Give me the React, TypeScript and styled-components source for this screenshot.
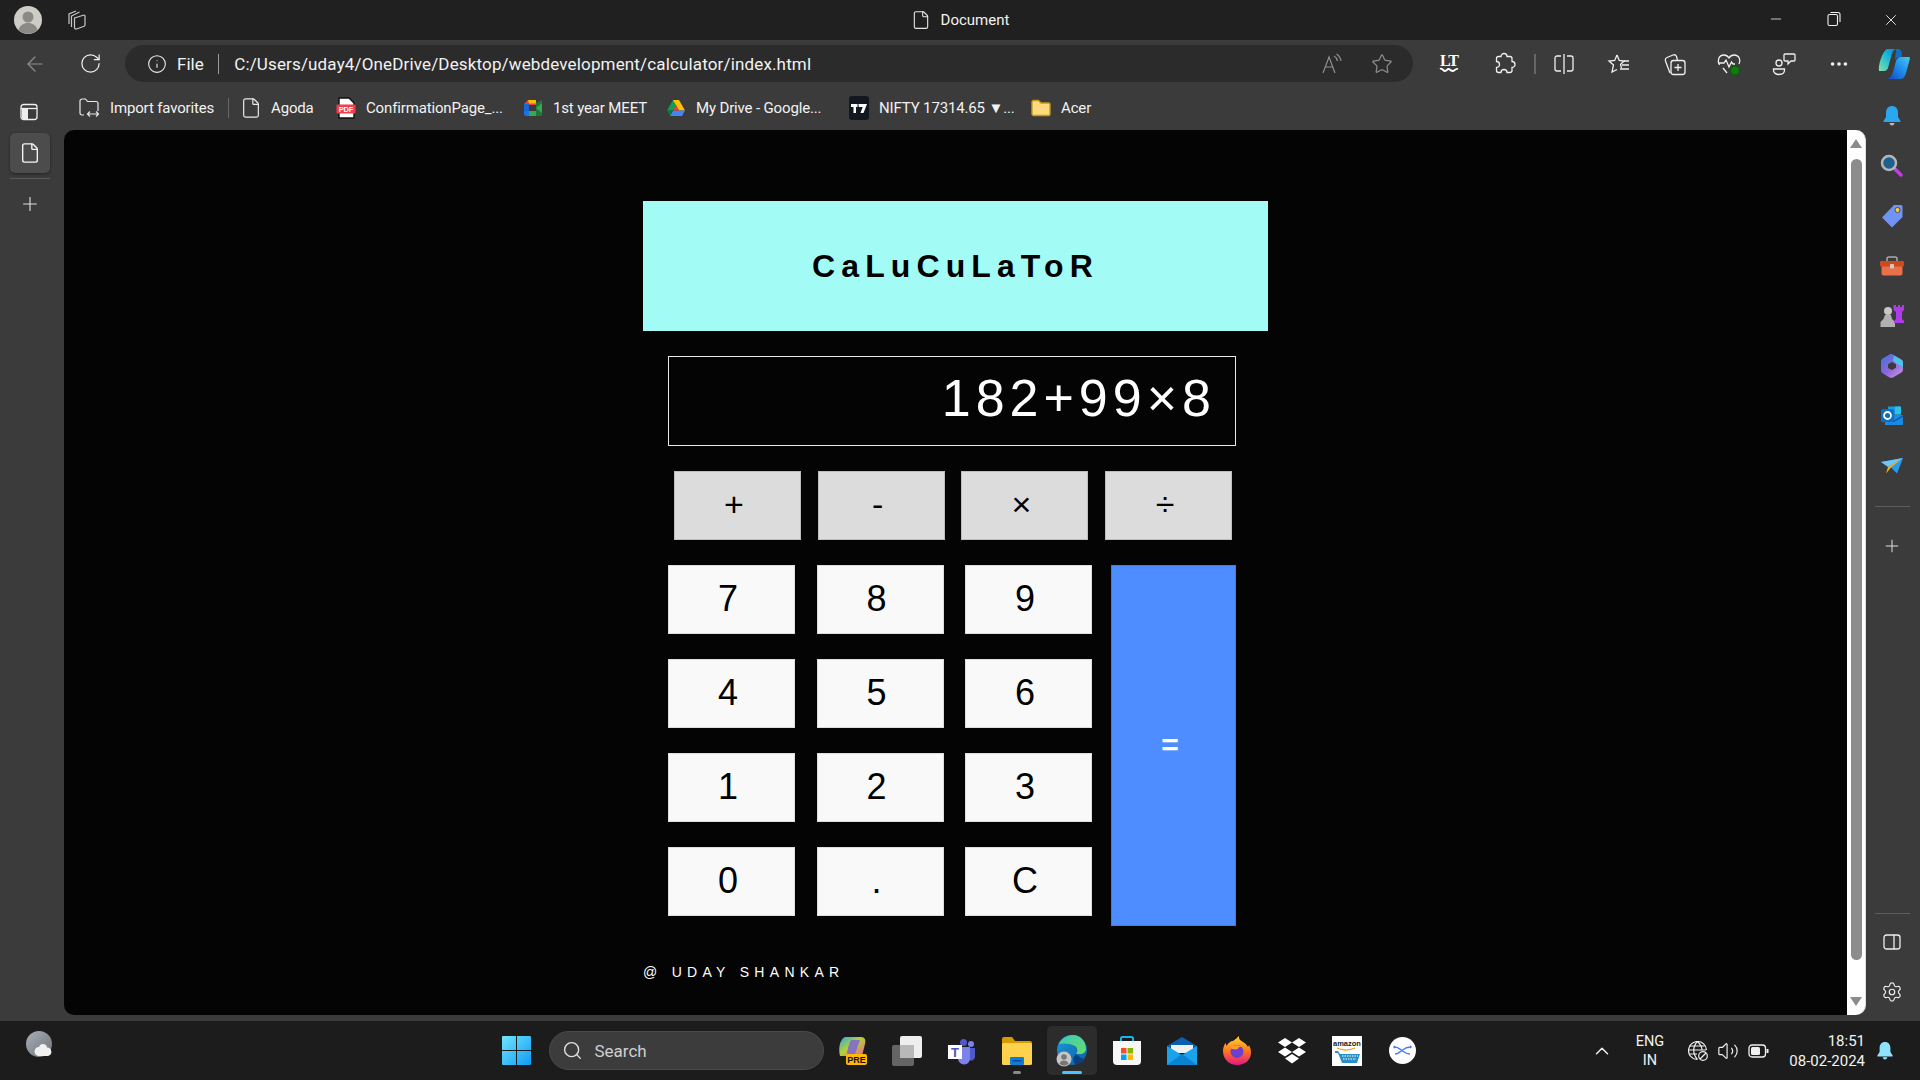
import styled, { createGlobalStyle } from "styled-components"
import { ArrowLeft, RotateCw, Info, Star, Settings, Plus, Search, ChevronUp, Volume2, Minus, X, File, MoreHorizontal } from "lucide-react"

const GlobalStyle = createGlobalStyle`
  html, body { margin: 0; padding: 0; background: #3b3b3b; }
  body { width: 1920px; height: 1080px; overflow: hidden; font-family: "Roboto", "Noto Sans", sans-serif; color: #f2f2f2; }
  * { box-sizing: border-box; }
`

const Screen = styled.div`
  width: 1920px;
  height: 1080px;
  display: flex;
  flex-direction: column;
`

/* title bar */
const TitleBar = styled.header`
  height: 40px;
  background: #202020;
  display: grid;
  grid-template-columns: 1fr auto 1fr;
  align-items: center;
`
const TitleLeft = styled.div`
  display: flex;
  align-items: center;
  padding-left: 14px;
  gap: 24px;
`
const TitleCenter = styled.div`
  display: flex;
  align-items: center;
  gap: 10px;
  font-size: 15px;
`
const WindowControls = styled.div`
  display: flex;
  justify-content: flex-end;
`
const WindowButton = styled.div`
  width: 57.5px;
  display: flex;
  justify-content: center;
`

/* toolbar */
const Toolbar = styled.div`
  height: 47px;
  display: flex;
  align-items: center;
  padding-left: 7.5px;
`
const ToolSlot = styled.div<{ $dim?: boolean }>`
  width: 55px;
  height: 37px;
  flex: none;
  display: flex;
  align-items: center;
  justify-content: center;
  color: ${(p) => (p.$dim ? "#8f8f8f" : "#f0f0f0")};
`
const AddressPill = styled.div`
  width: 1288px;
  height: 37px;
  margin: 0 8.5px 0 7.5px;
  background: #2b2b2b;
  border-radius: 19px;
  display: flex;
  align-items: center;
  padding-left: 22px;
  flex: none;
`
const FileLabel = styled.span`
  margin-left: 10px;
  font-size: 17px;
`
const PillDivider = styled.span`
  width: 1.5px;
  height: 20px;
  background: #9a9a9a;
  margin: 0 15px 0 14px;
`
const UrlText = styled.span`
  font-size: 17px;
  letter-spacing: 0.15px;
  white-space: nowrap;
`
const PillActions = styled.div`
  margin-left: auto;
  display: flex;
  align-items: center;
  gap: 28px;
  padding-right: 20px;
  color: #8f8f8f;
`
const ToolDivider = styled.span`
  width: 2px;
  height: 20px;
  background: #666;
  flex: none;
  margin: 0 1px 0 2px;
`
const LtMark = styled.span`
  display: flex;
  flex-direction: column;
  align-items: center;
  font-family: "Liberation Serif", serif;
  font-weight: 700;
  font-size: 16px;
  line-height: 13px;
  letter-spacing: -1px;
  color: #fff;
`

/* body */
const Body = styled.div`
  flex: 1;
  display: flex;
  min-height: 0;
`
const LeftRail = styled.aside`
  width: 64px;
  flex: none;
  display: flex;
  flex-direction: column;
  padding-left: 10px;
`
const RailTop = styled.div`
  height: 46px;
  width: 40px;
  padding: 3px 3px 0 0;
  display: flex;
  align-items: center;
  justify-content: center;
`
const ActiveTab = styled.div`
  width: 40px;
  height: 40px;
  background: #4c4c4c;
  border-radius: 5px;
  box-shadow: 0 1px 3px rgba(0, 0, 0, 0.4);
  display: flex;
  align-items: center;
  justify-content: center;
`
const RailDivider = styled.div`
  width: 40px;
  height: 1px;
  background: #5a5a5a;
  margin-top: 5px;
`
const RailPlus = styled.div`
  width: 40px;
  height: 50px;
  display: flex;
  align-items: center;
  justify-content: center;
`
const Main = styled.div`
  flex: 1;
  min-width: 0;
  display: flex;
  flex-direction: column;
  padding-bottom: 6px;
`
const Bookmarks = styled.nav`
  height: 43px;
  flex: none;
  display: flex;
  align-items: center;
  font-size: 15px;
  letter-spacing: -0.15px;
  padding: 0 0 2px 15px;
`
const Bookmark = styled.div<{ $w: number }>`
  width: ${(p) => p.$w}px;
  flex: none;
  display: flex;
  align-items: center;
  gap: 9px;
  white-space: nowrap;
`
const BookmarkIcon = styled.span`
  width: 22px;
  height: 24px;
  flex: none;
  display: flex;
  align-items: center;
  justify-content: center;
`
const BookmarkDivider = styled.span`
  width: 1px;
  height: 20px;
  background: #666;
  flex: none;
  margin-right: 11px;
`
const PageRow = styled.div`
  flex: 1;
  display: flex;
  min-height: 0;
`
const Viewport = styled.main`
  flex: 1;
  background: #040404;
  border-radius: 10px 0 0 10px;
  padding-top: 71px;
`
const Scrollbar = styled.div`
  width: 19px;
  flex: none;
  background: #fff;
  border-radius: 0 10px 10px 0;
  display: flex;
  flex-direction: column;
  align-items: center;
  padding: 9px 4px 9px 4px;
  border-right: 1px solid #ddd;
`
const ScrollArrow = styled.div<{ $down?: boolean }>`
  width: 0;
  height: 0;
  flex: none;
  border-left: 6px solid transparent;
  border-right: 6px solid transparent;
  ${(p) => (p.$down ? "border-top: 9px solid #8c8c8c;" : "border-bottom: 9px solid #8c8c8c;")}
`
const ScrollThumb = styled.div`
  flex: 1;
  width: 11px;
  margin: 11px 0 37px;
  background: #8c8c8c;
  border-radius: 6px;
`
const RightRail = styled.aside`
  width: 54px;
  flex: none;
  display: flex;
  flex-direction: column;
  align-items: center;
  padding: 4px 2px 4px 0;
`
const RailIcon = styled.div`
  width: 50px;
  height: 50px;
  flex: none;
  display: flex;
  align-items: center;
  justify-content: center;
  color: #ececec;
`
const RightDivider = styled.div<{ $bottom?: boolean }>`
  width: 35px;
  height: 1px;
  background: #5e5e5e;
  flex: none;
  margin: ${(p) => (p.$bottom ? "auto 0 3px" : "15px 0 14px")};
`

/* calculator */
const Calculator = styled.section`
  width: 625px;
  margin: 0 auto;
  font-family: "Liberation Sans", Arial, sans-serif;
`
const Heading = styled.h1`
  margin: 0;
  height: 130px;
  background: #a3fbf5;
  color: #000;
  font-size: 32px;
  font-weight: 700;
  letter-spacing: 6.1px;
  display: flex;
  align-items: center;
  justify-content: center;
`
const Display = styled.div`
  width: 568px;
  height: 90px;
  margin: 25px 0 25px 25px;
  border: 1px solid #e8e8e8;
  color: #fff;
  font-size: 52px;
  letter-spacing: 5px;
  display: flex;
  align-items: center;
  justify-content: flex-end;
  padding: 0 19px 6px 0;
`
const OperatorRow = styled.div`
  display: grid;
  grid-template-columns: repeat(4, 127px);
  column-gap: 16.67px;
  margin: 0 0 25px 31px;
`
const Key = styled.button<{ $kind?: "op" | "equals" }>`
  height: 69px;
  padding: 0 0 2px;
  border: 1px solid ${(p) => (p.$kind === "op" ? "#bdbdbd" : "#dedede")};
  background: ${(p) => (p.$kind === "op" ? "#dcdcdc" : "#f9f9f9")};
  color: #000;
  font-family: inherit;
  font-size: ${(p) => (p.$kind === "op" ? "34px" : "36px")};
  letter-spacing: 7px;
`
const KeypadArea = styled.div`
  display: flex;
  align-items: flex-start;
  margin-left: 25px;
`
const DigitGrid = styled.div`
  width: 424px;
  display: grid;
  grid-template-columns: repeat(3, 127px);
  justify-content: space-between;
  row-gap: 25px;
`
const EqualsKey = styled.button`
  width: 125px;
  height: 361px;
  margin-left: 19px;
  padding: 0 0 2px;
  flex: none;
  border: 1px solid #3f7ce6;
  background: #4d8dff;
  color: #fff;
  font-family: inherit;
  font-size: 30px;
  font-weight: 700;
  letter-spacing: 7px;
`
const Credit = styled.footer`
  margin-top: 38px;
  font-size: 14px;
  line-height: 16px;
  letter-spacing: 5.3px;
  color: #fff;
  white-space: pre;
`

/* taskbar */
const Taskbar = styled.footer`
  height: 59px;
  flex: none;
  background: #1c1c1c;
  display: flex;
  align-items: center;
`
const WidgetSlot = styled.div`
  width: 489px;
  padding: 0 0 12px 26px;
  flex: none;
  display: flex;
`
const TaskSlot = styled.div`
  width: 55px;
  height: 49px;
  flex: none;
  display: flex;
  align-items: center;
  justify-content: center;
`
const TaskTile = styled.div<{ $active?: boolean }>`
  position: relative;
  width: 50px;
  height: 49px;
  border-radius: 5px;
  display: flex;
  align-items: center;
  justify-content: center;
  background: ${(p) => (p.$active ? "#2c2c2c" : "transparent")};
`
const RunDot = styled.span<{ $active?: boolean }>`
  position: absolute;
  left: 50%;
  bottom: 1px;
  height: 3px;
  border-radius: 2px;
  transform: translateX(-50%);
  width: ${(p) => (p.$active ? "20px" : "8px")};
  background: ${(p) => (p.$active ? "#4cc2ff" : "#8a8a8a")};
`
const SearchBox = styled.div`
  width: 275px;
  height: 39px;
  margin: 0 1px 0 4.5px;
  flex: none;
  background: #3c3c3c;
  border: 1px solid #4a4a4a;
  border-radius: 20px;
  display: flex;
  align-items: center;
  padding-left: 12px;
  gap: 12px;
  font-size: 17px;
  color: #cfcfcf;
`
const Tray = styled.div`
  margin-left: auto;
  display: flex;
  align-items: center;
  padding-right: 15px;
`
const TraySlot = styled.div<{ $w: number }>`
  width: ${(p) => p.$w}px;
  flex: none;
  display: flex;
  align-items: center;
  justify-content: center;
  color: #f0f0f0;
`
const Lang = styled.div`
  width: 66px;
  flex: none;
  text-align: center;
  font-size: 14.5px;
  line-height: 19px;
`
const Clock = styled.div`
  width: 92px;
  flex: none;
  text-align: right;
  font-size: 15px;
  line-height: 20px;
`

const thin = { strokeWidth: 1.3 }

const Svg = styled.svg`
  display: block;
  flex: none;
`

function Avatar() {
  return (
    <Svg width="28" height="28" viewBox="0 0 28 28">
      <circle cx="14" cy="14" r="14" fill="#cdccc7" />
      <circle cx="14" cy="11" r="5.5" fill="#8b8a86" />
      <path d="M4.5 24c1.5-5 5-7 9.5-7s8 2 9.5 7a14 14 0 0 1-19 0z" fill="#8b8a86" />
    </Svg>
  )
}
function TabsIcon() {
  return (
    <Svg width="22" height="22" viewBox="0 0 22 22" fill="none" stroke="#c8c8c8" strokeWidth="1.2">
      <path d="M3 15V5L10 2" />
      <path d="M5.500 18V7L13.500 3" />
      <path d="M8.500 9l9.500-3c.7 0 1 .4 1 1V16c0 .6-.3 1-.9 1.200L10.500 20c-1 .3-2-.3-2-1.300z" />
    </Svg>
  )
}
function RestoreIcon() {
  return (
    <Svg width="14" height="16" viewBox="0 0 14 16" fill="none" stroke="#f0f0f0" strokeWidth="1.1">
      <rect x="1" y="3.5" width="9.5" height="11" rx="1.5" />
      <path d="M3.5 1.5h7.5a2 2 0 0 1 2 2V11" />
    </Svg>
  )
}
function ReadAloud() {
  return (
    <Svg width="22" height="22" viewBox="0 0 22 22" fill="none" stroke="currentColor" strokeWidth="1.2">
      <path d="M2 20L8 4l6 16M4.500 14h7" />
      <path d="M13 3c2 1 3 3 3.500 5M15.500 1c2.500 1.500 4 4 4.500 7" />
    </Svg>
  )
}
function ExtensionIcon() {
  return (
    <Svg width="24" height="24" viewBox="0 0 24 24" fill="none" stroke="currentColor" strokeWidth="1.3">
      <path d="M9 4.500a3 3 0 0 1 6 0h3a2 2 0 0 1 2 2v3a3 3 0 0 1 0 6v3a2 2 0 0 1-2 2h-3a3 3 0 0 0-6 0H6.500a2 2 0 0 1-2-2v-3a3 3 0 0 0 0-6V6.500a2 2 0 0 1 2-2z" />
    </Svg>
  )
}
function SplitIcon() {
  return (
    <Svg width="22" height="22" viewBox="0 0 22 22" fill="none" stroke="currentColor" strokeWidth="1.3">
      <path d="M8 3H4a2 2 0 0 0-2 2v11a2 2 0 0 0 2 2h4M14 3h4a2 2 0 0 1 2 2v11a2 2 0 0 1-2 2h-4M11 1v20" />
    </Svg>
  )
}
function FavoritesIcon() {
  return (
    <Svg width="24" height="24" viewBox="0 0 24 24" fill="none" stroke="currentColor" strokeWidth="1.3">
      <path d="M10 3l2.300 5.500 4.700.5-3.500 3.500 1 3.500M10 3L7.700 8.500 2 9l4.500 4-1.500 7 5-2.500" />
      <path d="M15 13h7M13 17h9M13 21h0M17 9h5" />
    </Svg>
  )
}
function CollectionsIcon() {
  return (
    <Svg width="24" height="24" viewBox="0 0 24 24" fill="none" stroke="currentColor" strokeWidth="1.3">
      <path d="M8 21L3.500 9C3 7.500 3.500 6 5 5.500L11 3c1.500-.5 3 .2 3.500 1.500L15.500 8" />
      <rect x="9" y="8.500" width="14" height="14" rx="2.500" />
      <path d="M16 12v7M12.500 15.500h7" />
    </Svg>
  )
}
function HealthIcon() {
  return (
    <Svg width="26" height="26" viewBox="0 0 26 26" fill="none" stroke="#f0f0f0" strokeWidth="1.3">
      <path d="M3.500 14C1 10 2.500 4 8 4c2.500 0 4 1.500 5 3 1-1.500 2.500-3 5-3 5.500 0 7 5.500 5 9" />
      <path d="M2 12h6l2-3 3 7 2.500-5 1.500 2h2" />
      <path d="M7 17l4 5" />
      <circle cx="19" cy="19.500" r="4.500" fill="#107c10" stroke="#0d5c0d" />
    </Svg>
  )
}
function SocialIcon() {
  return (
    <Svg width="26" height="26" viewBox="0 0 26 26" fill="none" stroke="currentColor" strokeWidth="1.3">
      <circle cx="8" cy="12" r="3" />
      <path d="M2.500 18h11v1c0 3-2.500 4.500-5.500 4.500s-5.500-1.500-5.500-4.500z" />
      <path d="M14 3h9a1 1 0 0 1 1 1v5a1 1 0 0 1-1 1h-3l-3 3v-3h-3a1 1 0 0 1-1-1V4a1 1 0 0 1 1-1z" />
    </Svg>
  )
}
function CopilotIcon() {
  return (
    <Svg width="32" height="32" viewBox="0 0 32 32">
      <defs>
        <linearGradient id="copA" x1="0" y1="1" x2="1" y2="0">
          <stop offset="0" stopColor="#7fe3a8" />
          <stop offset="0.6" stopColor="#18b6d8" />
          <stop offset="1" stopColor="#0f7fd6" />
        </linearGradient>
        <linearGradient id="copB" x1="0" y1="1" x2="1" y2="0">
          <stop offset="0" stopColor="#1742c8" />
          <stop offset="0.5" stopColor="#1b8be8" />
          <stop offset="1" stopColor="#49c8f5" />
        </linearGradient>
      </defs>
      <path d="M9 1h9c-3 1-4 4-5 8l-3 11c-.7 2-2 3-4 3H1C0 17 4 4 9 1z" fill="url(#copA)" />
      <path d="M23 9h8c1 0 1 1 .7 2.500L28 25c-1 4-3 6-6 6H9c3-1 5-3 6-7l3-11c.6-2 2.500-4 5-4z" fill="url(#copB)" />
      <path d="M18 1h2c3 0 4.500 3 3.500 8h-1.500c-2.500 0-4.500 1.500-5 4L18 1z" fill="#0e6fc0" />
    </Svg>
  )
}
function PanelIcon() {
  return (
    <Svg width="18" height="18" viewBox="0 0 18 18" fill="none" stroke="#eee" strokeWidth="1.3">
      <rect x="1" y="1.500" width="16" height="15" rx="2.500" />
      <path d="M1 5.500h16" />
      <path d="M2 6h6v10H3.500A1.500 1.500 0 0 1 2 14.500z" fill="#eee" stroke="none" />
    </Svg>
  )
}
function ImportIcon() {
  return (
    <Svg width="22" height="20" viewBox="0 0 22 20" fill="none" stroke="#eaeaea" strokeWidth="1.2">
      <path d="M5 17H3a2 2 0 0 1-2-2V3a2 2 0 0 1 2-2h3.500l2 2.500H17a2 2 0 0 1 2 2V13" />
      <path d="M9 16h10M11 13.500L8.500 16l2.500 2.500M17 13.500l2.500 2.500-2.500 2.500" />
    </Svg>
  )
}
function PdfIcon() {
  return (
    <Svg width="20" height="22" viewBox="0 0 20 22">
      <path d="M3 1h10l5 5v15H3z" fill="#fff" stroke="#111" strokeWidth="1.4" />
      <rect x="0.500" y="7.500" width="19" height="9" rx="1" fill="#f23d4d" />
      <text x="10" y="14.500" textAnchor="middle" fontSize="7.500" fontWeight="700" fill="#fff" fontFamily="Liberation Sans, sans-serif">PDF</text>
    </Svg>
  )
}
function MeetIcon() {
  return (
    <Svg width="20" height="18" viewBox="0 0 20 18">
      <path d="M5 1h8v5H6v6H1V5z" fill="#ea4335" />
      <path d="M5 1h8v3.500H6z" fill="#fbbc04" />
      <path d="M1 12h5v5H3a2 2 0 0 1-2-2z" fill="#1a73e8" />
      <path d="M1 5h5v7H1z" fill="#1967d2" />
      <path d="M6 12h7v5H6z" fill="#34a853" />
      <path d="M13 4v13l6 0V1z" fill="#188038" opacity="0.9" />
      <path d="M13 9l6-5v10z" fill="#34a853" />
    </Svg>
  )
}
function DriveIcon() {
  return (
    <Svg width="20" height="18" viewBox="0 0 20 18">
      <path d="M7 1h6l-6 10.500H1z" fill="#0f9d58" />
      <path d="M7 1h6l6 10.500h-6z" fill="#ffc107" />
      <path d="M4 17l3-5.500h12L16 17z" fill="#4285f4" />
      <path d="M1 11.500h6L4 17z" fill="#0a7a42" />
      <path d="M7 11.500L10 6l3 5.500z" fill="#ea4335" />
    </Svg>
  )
}
function TvLogo() {
  return (
    <Svg width="20" height="24" viewBox="0 0 20 24">
      <rect width="20" height="24" rx="3" fill="#131722" />
      <path d="M2 8h6.500v3H7v6H4.500v-6H2zM9.500 8H18l-3.500 9h-3l2.200-6H10c-.5 0-.5-3-.5-3z" fill="#fff" />
    </Svg>
  )
}
function FolderIcon() {
  return (
    <Svg width="20" height="18" viewBox="0 0 20 18">
      <path d="M1 3a1.500 1.500 0 0 1 1.500-1.500h5L10 4h7.500A1.500 1.500 0 0 1 19 5.500V15a1.500 1.500 0 0 1-1.500 1.500h-15A1.500 1.500 0 0 1 1 15z" fill="#fedb7e" stroke="#c49a1c" strokeWidth="1.400" />
    </Svg>
  )
}
function BellIcon({ color = "#29a8ef", size = 20 }: { color?: string; size?: number }) {
  return (
    <Svg width={size} height={size} viewBox="0 0 20 20">
      <path d="M10 0c4 0 6 3 6 7v4l2.500 4c.2.600 0 1-.6 1H2.100c-.6 0-.8-.4-.6-1L4 11V7c0-4 2-7 6-7z" fill={color} />
      <path d="M7.500 17h5c-.2 1.500-1.200 2.500-2.500 2.500S7.700 18.500 7.500 17z" fill={color === "#29a8ef" ? "#bbb" : color} />
    </Svg>
  )
}
function MagnifierIcon() {
  return (
    <Svg width="24" height="24" viewBox="0 0 24 24">
      <circle cx="9" cy="9" r="7" fill="#1d5f8f" stroke="#b5b5b5" strokeWidth="2.500" />
      <path d="M14 14l2 2" stroke="#b5b5b5" strokeWidth="2.500" />
      <path d="M16 16l5 5" stroke="#c13fe0" strokeWidth="3.500" strokeLinecap="round" />
    </Svg>
  )
}
function TagIcon() {
  return (
    <Svg width="22" height="24" viewBox="0 0 22 24">
      <path d="M13 1h7a1.500 1.500 0 0 1 1.500 1.500V13L11 23.500 1 13.500z" fill="#6f94f5" />
      <circle cx="16.500" cy="6" r="2.500" fill="#ffcf2e" stroke="#333" strokeWidth="0.800" />
    </Svg>
  )
}
function ToolboxIcon() {
  return (
    <Svg width="24" height="20" viewBox="0 0 24 20">
      <path d="M7 6V3a2 2 0 0 1 2-2h6a2 2 0 0 1 2 2v3" fill="none" stroke="#aaa" strokeWidth="1.500" />
      <rect x="1.500" y="9" width="21" height="10.500" rx="2" fill="#e9714a" />
      <rect y="5" width="24" height="5.500" rx="1" fill="#cf4a1a" />
      <rect x="10" y="8" width="4" height="4.500" rx="0.800" fill="#c9c9c9" />
    </Svg>
  )
}
function ChessIcon() {
  return (
    <Svg width="26" height="24" viewBox="0 0 26 24">
      <circle cx="9" cy="7" r="4" fill="#c7c7c7" />
      <path d="M6 11h6l1 4 3 3v5H1.500v-5l3-3z" fill="#b0b0b0" />
      <path d="M14.500 1h2.500v2h2V1h2v2h2V1h2v5l-2 2v7l2 2v2H15v-2l2-2V8l-2.500-2z" fill="#b03be8" />
    </Svg>
  )
}
function OfficeIcon() {
  return (
    <Svg width="22" height="24" viewBox="0 0 22 24">
      <defs>
        <linearGradient id="m365" x1="0" y1="0" x2="1" y2="1">
          <stop offset="0" stopColor="#2f7de0" />
          <stop offset="0.5" stopColor="#8f63d8" />
          <stop offset="1" stopColor="#c79be8" />
        </linearGradient>
      </defs>
      <path d="M11 0l9 5.200c1.500 1 2 2 2 3.800v6c0 1.800-.5 2.800-2 3.800L12 23.500c-1 .6-2.500.5-3.500-.1L2 19.500C.5 18.500 0 17.500 0 16V8c0-1.500.5-2.800 2-3.700L9 .3c.7-.4 1.400-.5 2-.3zM11 8l-4 2.300v3.600L11 16l4-2.200v-3.500z" fill="url(#m365)" fillRule="evenodd" />
      <path d="M13 1.500l7 4c1.500 1 2 2 2 3.800v4l-7-3.800-3-3z" fill="#49c3e6" />
    </Svg>
  )
}
function OutlookIcon() {
  return (
    <Svg width="22" height="20" viewBox="0 0 22 20">
      <rect x="7" y="0.500" width="12" height="8" fill="#1a9ae0" />
      <rect x="14" y="0.500" width="6" height="8" fill="#29c0f0" />
      <path d="M4 9h18v10H4z" fill="#1f88dc" />
      <path d="M4 9l9 5.500L22 9v2l-9 5-9-5z" fill="#0c5fb0" />
      <rect y="3" width="13" height="13" rx="1.500" fill="#0a6fc8" />
      <circle cx="6.500" cy="9.500" r="3.500" fill="none" stroke="#fff" strokeWidth="1.800" />
    </Svg>
  )
}
function SendIcon() {
  return (
    <Svg width="22" height="16" viewBox="0 0 22 16">
      <path d="M0 4L22 0l-6 15.500-6-6z" fill="#2a9af0" />
      <path d="M0 4L22 0 7 9z" fill="#6cc6f7" />
      <path d="M7 9L22 0 10 9.500 5 15.500z" fill="#f2b211" />
    </Svg>
  )
}
function SidePaneIcon() {
  return (
    <Svg width="18" height="16" viewBox="0 0 18 16" fill="none" stroke="#eee" strokeWidth="1.300">
      <rect x="1" y="1" width="16" height="14" rx="2.500" />
      <path d="M11 1v14" />
    </Svg>
  )
}
function WeatherIcon() {
  return (
    <Svg width="27" height="27" viewBox="0 0 27 27">
      <defs>
        <linearGradient id="wx" x1="0" y1="0" x2="1" y2="1">
          <stop offset="0" stopColor="#aab0b8" />
          <stop offset="1" stopColor="#6d7278" />
        </linearGradient>
      </defs>
      <circle cx="13" cy="13" r="13" fill="url(#wx)" />
      <path d="M13 25a4.500 4.500 0 0 1 0-9c.5-2 2-3 4-3s4 1.500 4 3.500a4.300 4.300 0 0 1 1 8.500z" fill="#f0f0f0" />
    </Svg>
  )
}
function WindowsLogo() {
  return (
    <Svg width="29" height="29" viewBox="0 0 29 29">
      <defs>
        <linearGradient id="win" x1="0" y1="0" x2="1" y2="1">
          <stop offset="0" stopColor="#6fe6ff" />
          <stop offset="1" stopColor="#0e9bf5" />
        </linearGradient>
      </defs>
      <path d="M0 1a1 1 0 0 1 1-1h13v14H0zM15 0h13a1 1 0 0 1 1 1v13H15zM0 15h14v14H1a1 1 0 0 1-1-1zM15 15h14v13a1 1 0 0 1-1 1H15z" fill="url(#win)" />
    </Svg>
  )
}
function CopilotPre() {
  return (
    <Svg width="30" height="30" viewBox="0 0 30 30">
      <defs>
        <linearGradient id="pre" x1="0" y1="0" x2="1" y2="1">
          <stop offset="0" stopColor="#2aa5f0" />
          <stop offset="0.45" stopColor="#b3d334" />
          <stop offset="1" stopColor="#f0609a" />
        </linearGradient>
      </defs>
      <path d="M8 1h16c4 0 5 3 4 7l-3 12H3C1 12 3 3 8 1z" fill="url(#pre)" />
      <path d="M14 4c-2 4-4 10-4 14h8l5-14z" fill="#7a5fe0" opacity="0.8" />
      <rect x="9" y="18" width="21" height="11" rx="2" fill="#ffb900" />
      <text x="19.500" y="27" textAnchor="middle" fontSize="9" fontWeight="700" fill="#111" fontFamily="Liberation Sans, sans-serif">PRE</text>
    </Svg>
  )
}
function TaskViewIcon() {
  return (
    <Svg width="30" height="30" viewBox="0 0 30 30">
      <rect x="8" y="0" width="22" height="22" rx="2" fill="#eeeeee" />
      <rect x="0" y="9" width="22" height="21" rx="2" fill="#6b6b6b" opacity="0.92" />
      <rect x="8" y="9" width="14" height="13" fill="#b8b8b8" />
    </Svg>
  )
}
function TeamsIcon() {
  return (
    <Svg width="28" height="28" viewBox="0 0 28 28">
      <circle cx="23" cy="7" r="3" fill="#7b83eb" />
      <circle cx="15.500" cy="5.500" r="3.500" fill="#5059c9" />
      <path d="M19 11h8v9a4 4 0 0 1-6 3z" fill="#5059c9" />
      <path d="M9 10h13v11a6 6 0 0 1-12 1z" fill="#7b83eb" />
      <rect x="0" y="8" width="14" height="14" fill="#fff" />
      <text x="7" y="20" textAnchor="middle" fontSize="13" fontWeight="700" fill="#4b53bc" fontFamily="Liberation Sans, sans-serif">T</text>
    </Svg>
  )
}
function ExplorerIcon() {
  return (
    <Svg width="30" height="28" viewBox="0 0 30 28">
      <path d="M0 2a2 2 0 0 1 2-2h8l3 4h15a2 2 0 0 1 2 2v3H0z" fill="#d99a00" />
      <rect y="6" width="30" height="22" rx="1.500" fill="#ffd24d" />
      <rect x="8" y="20" width="14" height="8" rx="1" fill="#0f7dd8" />
      <rect x="10.500" y="23" width="9" height="1.600" fill="#0a4f95" />
    </Svg>
  )
}
function EdgeIcon() {
  return (
    <Svg width="32" height="32" viewBox="0 0 32 32">
      <defs>
        <linearGradient id="edgeA" x1="0" y1="0" x2="1" y2="1">
          <stop offset="0" stopColor="#1d9ad8" />
          <stop offset="1" stopColor="#0b5fa8" />
        </linearGradient>
        <linearGradient id="edgeB" x1="0" y1="0" x2="1" y2="1">
          <stop offset="0" stopColor="#37c9c0" />
          <stop offset="1" stopColor="#6fdc64" />
        </linearGradient>
      </defs>
      <circle cx="16" cy="15" r="15" fill="url(#edgeA)" />
      <path d="M3 9C6 2 13 0 17 0c7 0 13 6 13 14 0 3-3 5-6 5h-4c2-2 2-6-1-8-5-3-12-3-16-2z" fill="url(#edgeB)" />
      <path d="M20 19c-3 3-4 7-1 10 4 1 8-1 10-5-2 0-6-2-9-5z" fill="#0a3f80" />
      <circle cx="8" cy="24" r="7.500" fill="#c6c6c6" />
      <circle cx="8" cy="22" r="2.800" fill="#777" />
      <path d="M3.500 29c.5-2.500 2.300-3.500 4.500-3.500s4 1 4.500 3.500a7.500 7.500 0 0 1-9 0z" fill="#777" />
    </Svg>
  )
}
function StoreIcon() {
  return (
    <Svg width="30" height="30" viewBox="0 0 30 30">
      <path d="M9 5V2.500c0-1 .5-1.500 1.500-1.500h9c1 0 1.500.5 1.500 1.500V5" fill="none" stroke="#1cb5e8" strokeWidth="2" />
      <path d="M1 5h28v20a4 4 0 0 1-4 4H5a4 4 0 0 1-4-4z" fill="#f7f7f7" />
      <rect x="9" y="12" width="5.500" height="5.500" fill="#f25022" />
      <rect x="15.500" y="12" width="5.500" height="5.500" fill="#7fba00" />
      <rect x="9" y="18.500" width="5.500" height="5.500" fill="#00a4ef" />
      <rect x="15.500" y="18.500" width="5.500" height="5.500" fill="#ffb900" />
    </Svg>
  )
}
function MailIcon() {
  return (
    <Svg width="30" height="28" viewBox="0 0 30 28">
      <path d="M0 9L15 0l15 9v2H0z" fill="#0a5fb0" />
      <path d="M4 8h22v8H4z" fill="#f0f0f0" />
      <path d="M0 9l15 9 15-9v19H0z" fill="#1aa3ea" />
      <path d="M0 28l15-11 15 11z" fill="#0c82d3" />
    </Svg>
  )
}
function FirefoxIcon() {
  return (
    <Svg width="28" height="30" viewBox="0 0 28 30">
      <defs>
        <linearGradient id="ffx" x1="0.500" y1="0" x2="0.500" y2="1">
          <stop offset="0" stopColor="#ffd53a" />
          <stop offset="0.5" stopColor="#ff7a1a" />
          <stop offset="1" stopColor="#e31587" />
        </linearGradient>
      </defs>
      <path d="M14 29C6 29 0 23 0 15c0-3 1-6 2.500-8l1 3C5 7 7.500 5 10 5c2-1.500 4-3 6-5-.5 3 1 4 4 6 3 2 4 3 5 5l1-2c2 4 2 6 2 8 0 7-6 12-14 12z" fill="url(#ffx)" />
      <circle cx="14" cy="15.500" r="6.500" fill="#6b3fd0" />
      <path d="M7 12c2-3 8-4 12-1-2 0-4 0-4 2-3 1-6 0-8-1z" fill="#ff9a2e" />
    </Svg>
  )
}
function DropboxIcon() {
  return (
    <Svg width="30" height="26" viewBox="0 0 30 26" fill="#fff">
      <path d="M8 0l7 4.500L8 9 1 4.500zM22 0l7 4.500L22 9l-7-4.500zM8 9.500l7 4.500-7 4.500L1 14zM22 9.500l7 4.500-7 4.500L15 14zM15 16l7 4.500-7 5-7-5z" />
    </Svg>
  )
}
function AmazonIcon() {
  return (
    <Svg width="30" height="30" viewBox="0 0 30 30">
      <rect width="30" height="30" fill="#fff" />
      <text x="15" y="10" textAnchor="middle" fontSize="7.500" fontWeight="700" fill="#222" fontFamily="Liberation Sans, sans-serif">amazon</text>
      <path d="M5 12c5 2.500 12 2.500 18 0" fill="none" stroke="#f90" strokeWidth="1.200" />
      <path d="M3 15h3l2 3h20l-3 9H10L6 17H3z" fill="#2a8fc8" />
      <path d="M10 20h16M11 23h13" stroke="#fff" strokeWidth="1" strokeDasharray="1.500 1" />
    </Svg>
  )
}
function SyncIcon() {
  return (
    <Svg width="27" height="27" viewBox="0 0 27 27">
      <circle cx="13.500" cy="13.500" r="13.500" fill="#fff" />
      <path d="M6 10c3 0 4 1.500 7.500 4s5 3 7.500 3M6 17c3 0 4-1.500 7.500-4s5-3 7.500-3M6 9l-1 1 1 1M21 9l1 1-1 1" fill="none" stroke="#4d7cf0" strokeWidth="1.500" />
    </Svg>
  )
}
function GlobeBlocked() {
  return (
    <Svg width="20" height="20" viewBox="0 0 20 20" fill="none" stroke="#f0f0f0" strokeWidth="1.200">
      <path d="M9 18.500A9 9 0 1 1 18.500 9" />
      <path d="M1 9h17M1.500 5h15M1.500 13H9M9.500 .5c-5 5-5 12.500 0 18M9.500 .5c3 3 4.500 6 4.500 8" />
      <circle cx="15" cy="15" r="4.300" fill="#1c1c1c" />
      <path d="M12 18l6-6" />
    </Svg>
  )
}
function BatteryIcon() {
  return (
    <Svg width="21" height="14" viewBox="0 0 21 14" fill="none" stroke="#f0f0f0" strokeWidth="1.300">
      <rect x="1" y="1" width="16.500" height="12" rx="3" />
      <rect x="3" y="3" width="9" height="8" rx="1.500" fill="#f0f0f0" stroke="none" />
      <path d="M19.500 5v4" strokeWidth="2" />
    </Svg>
  )
}

const operators = ["+", "-", "×", "÷"]
const digits = ["7", "8", "9", "4", "5", "6", "1", "2", "3", "0", ".", "C"]

export default function App() {
  return (
    <Screen>
      <GlobalStyle />
      <TitleBar>
        <TitleLeft>
          <Avatar />
          <TabsIcon />
        </TitleLeft>
        <TitleCenter>
          <File size={20} color="#e6e6e6" {...thin} />
          Document
        </TitleCenter>
        <WindowControls>
          <WindowButton><Minus size={16} color="#f0f0f0" strokeWidth={1.2} /></WindowButton>
          <WindowButton><RestoreIcon /></WindowButton>
          <WindowButton><X size={18} color="#f0f0f0" strokeWidth={1.2} /></WindowButton>
        </WindowControls>
      </TitleBar>

      <Toolbar>
        <ToolSlot $dim><ArrowLeft size={24} strokeWidth={1.2} /></ToolSlot>
        <ToolSlot><RotateCw size={23} strokeWidth={1.3} /></ToolSlot>
        <AddressPill>
          <Info size={20} color="#f0f0f0" {...thin} />
          <FileLabel>File</FileLabel>
          <PillDivider />
          <UrlText>C:/Users/uday4/OneDrive/Desktop/webdevelopment/calculator/index.html</UrlText>
          <PillActions>
            <ReadAloud />
            <Star size={22} {...thin} />
          </PillActions>
        </AddressPill>
        <ToolSlot>
          <LtMark>
            LT
            <Svg width="20" height="6" viewBox="0 0 20 6" fill="none" stroke="#fff" strokeWidth="1.800">
              <path d="M1 2c2-1.500 3 2 5 2s3-3 4-2 3 2 4 2 3-3 5-2" />
            </Svg>
          </LtMark>
        </ToolSlot>
        <ToolSlot><ExtensionIcon /></ToolSlot>
        <ToolDivider />
        <ToolSlot><SplitIcon /></ToolSlot>
        <ToolSlot><FavoritesIcon /></ToolSlot>
        <ToolSlot><CollectionsIcon /></ToolSlot>
        <ToolSlot><HealthIcon /></ToolSlot>
        <ToolSlot><SocialIcon /></ToolSlot>
        <ToolSlot><MoreHorizontal size={22} strokeWidth={2} /></ToolSlot>
        <ToolSlot><CopilotIcon /></ToolSlot>
      </Toolbar>

      <Body>
        <LeftRail>
          <RailTop><PanelIcon /></RailTop>
          <ActiveTab><File size={22} color="#f5f5f5" strokeWidth={1.5} /></ActiveTab>
          <RailDivider />
          <RailPlus><Plus size={22} color="#e0e0e0" strokeWidth={1.2} /></RailPlus>
        </LeftRail>

        <Main>
          <Bookmarks>
            <Bookmark $w={149}><BookmarkIcon><ImportIcon /></BookmarkIcon>Import favorites</Bookmark>
            <BookmarkDivider />
            <Bookmark $w={95}><BookmarkIcon><File size={22} color="#eaeaea" {...thin} /></BookmarkIcon>Agoda</Bookmark>
            <Bookmark $w={187}><BookmarkIcon><PdfIcon /></BookmarkIcon>ConfirmationPage_...</Bookmark>
            <Bookmark $w={143}><BookmarkIcon><MeetIcon /></BookmarkIcon>1st year MEET</Bookmark>
            <Bookmark $w={183}><BookmarkIcon><DriveIcon /></BookmarkIcon>My Drive - Google...</Bookmark>
            <Bookmark $w={182}><BookmarkIcon><TvLogo /></BookmarkIcon>NIFTY 17314.65 ▼...</Bookmark>
            <Bookmark $w={60}><BookmarkIcon><FolderIcon /></BookmarkIcon>Acer</Bookmark>
          </Bookmarks>

          <PageRow>
            <Viewport>
              <Calculator>
                <Heading>CaLuCuLaToR</Heading>
                <Display>182+99×8</Display>
                <OperatorRow>
                  {operators.map((op) => (
                    <Key key={op} $kind="op">{op}</Key>
                  ))}
                </OperatorRow>
                <KeypadArea>
                  <DigitGrid>
                    {digits.map((d) => (
                      <Key key={d}>{d}</Key>
                    ))}
                  </DigitGrid>
                  <EqualsKey>=</EqualsKey>
                </KeypadArea>
                <Credit>@ UDAY SHANKAR</Credit>
              </Calculator>
            </Viewport>
            <Scrollbar>
              <ScrollArrow />
              <ScrollThumb />
              <ScrollArrow $down />
            </Scrollbar>
          </PageRow>
        </Main>

        <RightRail>
          <RailIcon><BellIcon /></RailIcon>
          <RailIcon><MagnifierIcon /></RailIcon>
          <RailIcon><TagIcon /></RailIcon>
          <RailIcon><ToolboxIcon /></RailIcon>
          <RailIcon><ChessIcon /></RailIcon>
          <RailIcon><OfficeIcon /></RailIcon>
          <RailIcon><OutlookIcon /></RailIcon>
          <RailIcon><SendIcon /></RailIcon>
          <RightDivider />
          <RailIcon><Plus size={20} color="#e0e0e0" strokeWidth={1.2} /></RailIcon>
          <RightDivider $bottom />
          <RailIcon><SidePaneIcon /></RailIcon>
          <RailIcon><Settings size={22} {...thin} /></RailIcon>
        </RightRail>
      </Body>

      <Taskbar>
        <WidgetSlot><WeatherIcon /></WidgetSlot>
        <TaskSlot><WindowsLogo /></TaskSlot>
        <SearchBox>
          <Search size={21} color="#e0e0e0" strokeWidth={1.6} />
          Search
        </SearchBox>
        <TaskSlot><CopilotPre /></TaskSlot>
        <TaskSlot><TaskViewIcon /></TaskSlot>
        <TaskSlot><TeamsIcon /></TaskSlot>
        <TaskSlot><TaskTile><ExplorerIcon /><RunDot /></TaskTile></TaskSlot>
        <TaskSlot><TaskTile $active><EdgeIcon /><RunDot $active /></TaskTile></TaskSlot>
        <TaskSlot><StoreIcon /></TaskSlot>
        <TaskSlot><MailIcon /></TaskSlot>
        <TaskSlot><FirefoxIcon /></TaskSlot>
        <TaskSlot><DropboxIcon /></TaskSlot>
        <TaskSlot><AmazonIcon /></TaskSlot>
        <TaskSlot><SyncIcon /></TaskSlot>
        <Tray>
          <TraySlot $w={30}><ChevronUp size={22} strokeWidth={1.6} /></TraySlot>
          <Lang>ENG<br />IN</Lang>
          <TraySlot $w={30}><GlobeBlocked /></TraySlot>
          <TraySlot $w={30}><Volume2 size={22} {...thin} /></TraySlot>
          <TraySlot $w={30}><BatteryIcon /></TraySlot>
          <Clock>18:51<br />08-02-2024</Clock>
          <TraySlot $w={40}><BellIcon color="#8fe3ff" size={18} /></TraySlot>
        </Tray>
      </Taskbar>
    </Screen>
  )
}
